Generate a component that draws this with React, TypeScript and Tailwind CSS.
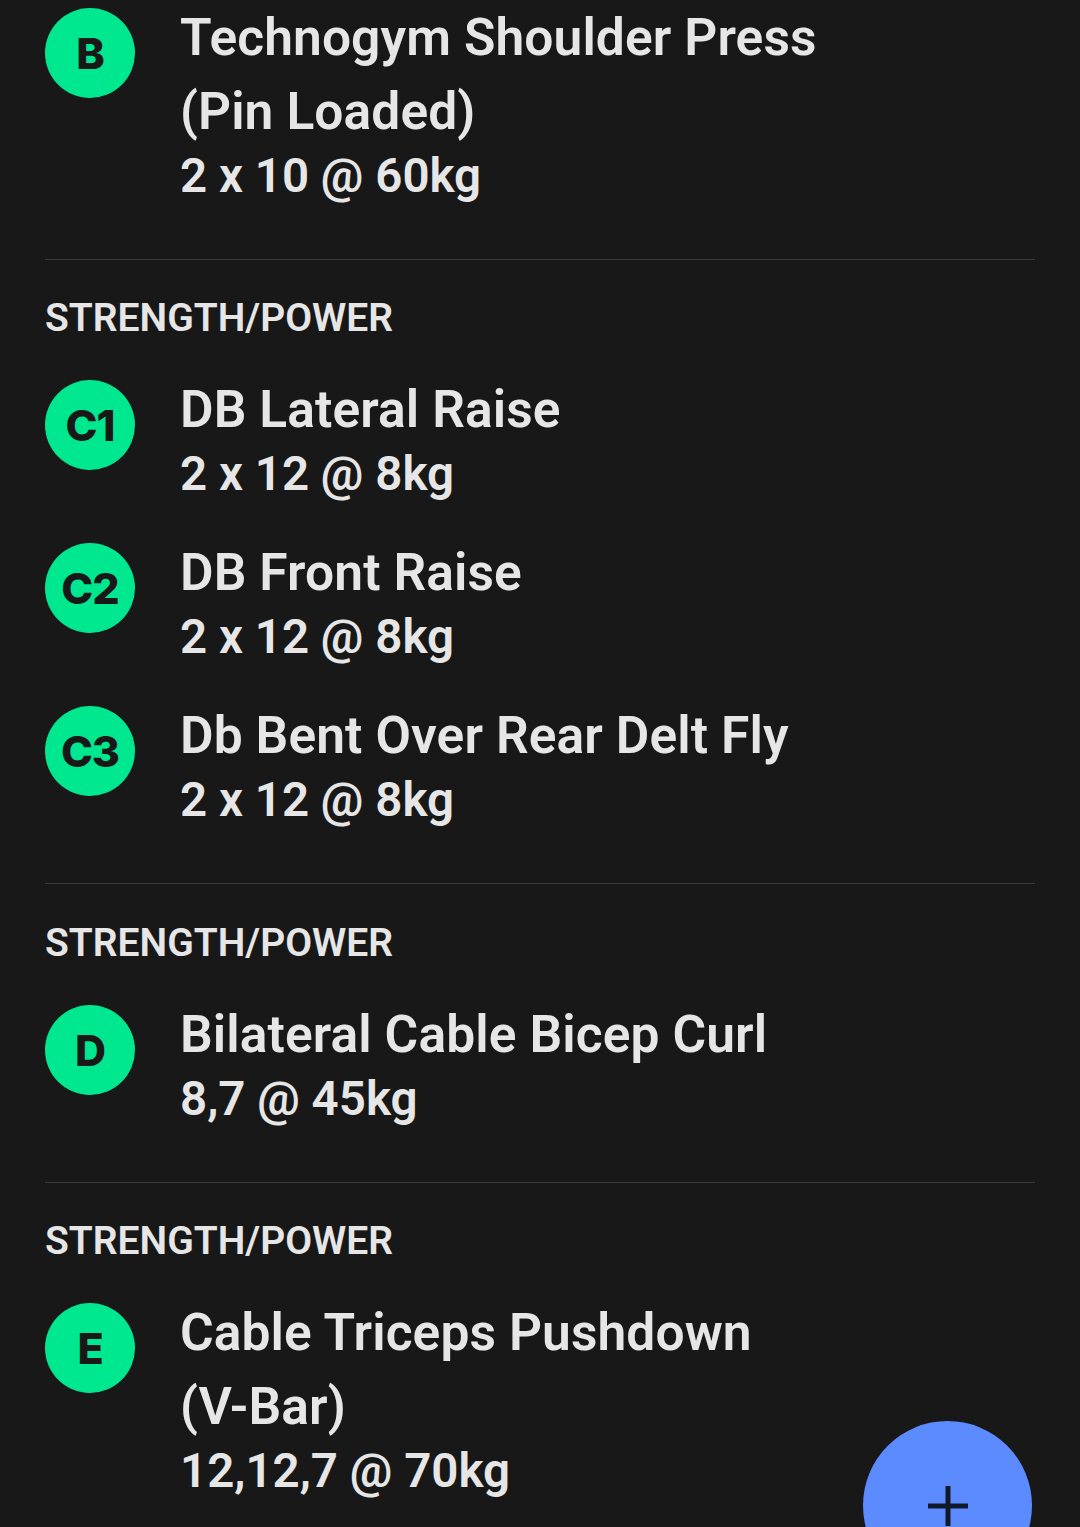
const sections = [
  {
    label: "",
    labelClass: "",
    items: [{ badge: "B", title: ["Technogym Shoulder Press", "(Pin Loaded)"], detail: "2 x 10 @ 60kg" }],
  },
  {
    label: "STRENGTH/POWER",
    labelClass: "mt-[36px] mb-[32px]",
    items: [
      { badge: "C1", title: ["DB Lateral Raise"], detail: "2 x 12 @ 8kg" },
      { badge: "C2", title: ["DB Front Raise"], detail: "2 x 12 @ 8kg" },
      { badge: "C3", title: ["Db Bent Over Rear Delt Fly"], detail: "2 x 12 @ 8kg" },
    ],
  },
  {
    label: "STRENGTH/POWER",
    labelClass: "mt-[37px] mb-[32px]",
    items: [{ badge: "D", title: ["Bilateral Cable Bicep Curl"], detail: "8,7 @ 45kg" }],
  },
  {
    label: "STRENGTH/POWER",
    labelClass: "mt-[36px] mb-[32px]",
    items: [{ badge: "E", title: ["Cable Triceps Pushdown", "(V-Bar)"], detail: "12,12,7 @ 70kg" }],
  },
];

type Item = { badge: string; title: string[]; detail: string };

function ExerciseRow({ item }: { item: Item }) {
  return (
    <div className="flex items-start">
      <div className="mt-2 flex h-[90px] w-[90px] shrink-0 items-center justify-center rounded-full bg-[#00e88f]">
        <span className="font-['Inter',sans-serif] text-[43px] leading-none font-extrabold tracking-[-1px] text-[#181818]">
          {item.badge}
        </span>
      </div>
      <div className="ml-[46px]">
        {item.title.map((line) => (
          <div
            key={line}
            className="-ml-px h-[74px] pt-px text-[51.5px] leading-[74px] font-[650] tracking-[0.1px] text-[#e6e6e6]"
          >
            {line}
          </div>
        ))}
        <div className="-ml-px text-[47.5px] leading-[56px] font-[650] text-[#e6e6e6]">{item.detail}</div>
      </div>
    </div>
  );
}

export default function App() {
  return (
    <div className="relative h-[1527px] w-[1080px] overflow-hidden bg-[#181818] font-['Roboto',sans-serif]">
      <div className="mx-[45px]">
        {sections.map((section, i) => (
          <div key={i} className={i > 0 ? "border-t border-[#3a3a3a]" : ""}>
            {section.label && (
              <div className={`${section.labelClass} text-[39px] leading-[44px] font-[650] text-[#e6e6e6]`}>
                {section.label}
              </div>
            )}
            <div className="flex flex-col gap-[33px] pb-[55px]">
              {section.items.map((item) => (
                <ExerciseRow key={item.badge} item={item} />
              ))}
            </div>
          </div>
        ))}
      </div>

      <button
        type="button"
        className="absolute top-[1421px] left-[863px] flex h-[169px] w-[169px] items-center justify-center rounded-full bg-[#5c8aff]"
      >
        <svg width="40" height="40" viewBox="0 0 40 40" fill="none" stroke="#10182a" strokeWidth="5">
          <path d="M20 0v40M0 20h40" />
        </svg>
      </button>
    </div>
  );
}
